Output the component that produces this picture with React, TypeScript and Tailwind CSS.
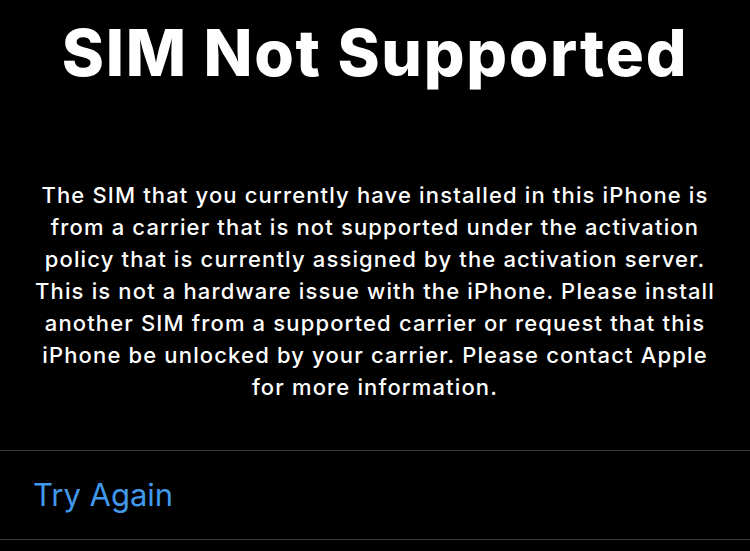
import React from "react";

const lines = [
  "The SIM that you currently have installed in this iPhone is",
  "from a carrier that is not supported under the activation",
  "policy that is currently assigned by the activation server.",
  "This is not a hardware issue with the iPhone. Please install",
  "another SIM from a supported carrier or request that this",
  "iPhone be unlocked by your carrier. Please contact Apple",
  "for more information.",
];

export default function App() {
  return (
    <div
      className="w-[750px] h-[551px] bg-black text-white flex flex-col overflow-hidden"
      style={{ fontFamily: "Inter, 'Noto Sans', sans-serif" }}
    >
      <div className="mt-[21px] h-[64px] text-[64px] leading-[64px] font-extrabold text-center tracking-[1.7px] whitespace-nowrap">
        SIM Not Supported
      </div>
      <div className="mt-[94px] flex flex-col items-center text-[22px] leading-[32px] font-medium tracking-[1.15px]">
        {lines.map((l) => (
          <div key={l} className="whitespace-nowrap">
            {l}
          </div>
        ))}
      </div>
      <div className="mt-[47px] border-t border-[#3a3a3c] border-b h-[90px] flex items-center px-[33px]">
        <span className="text-[31px] leading-[88px] text-[#4199eb]">Try Again</span>
      </div>
    </div>
  );
}
